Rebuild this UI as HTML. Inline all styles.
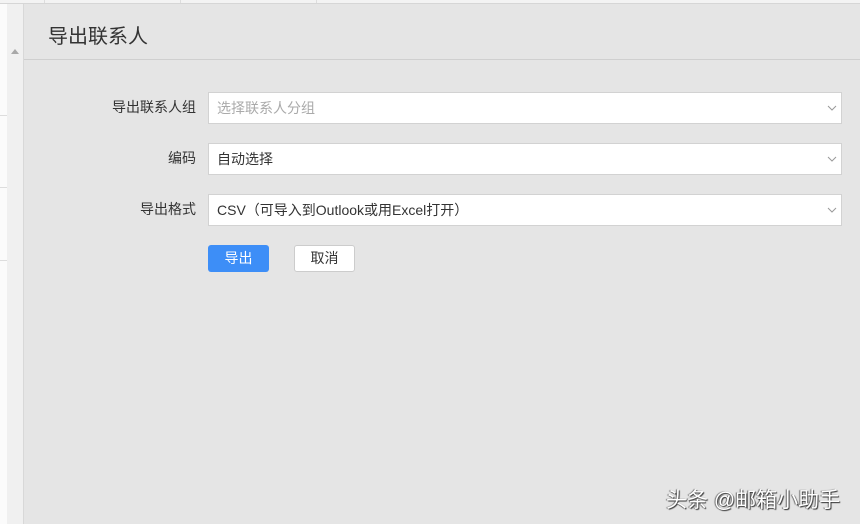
<!DOCTYPE html>
<html><head><meta charset="utf-8"><style>
body{margin:0;width:860px;height:524px;overflow:hidden;background:#e5e5e5;font-family:"Liberation Sans","Noto Sans CJK SC",sans-serif;position:relative}
.abs{position:absolute}
.left{left:0;top:0;width:7px;height:524px;background:#fbfbfb}
.sb{left:7px;top:0;width:16px;height:524px;background:#f0f0f0;border-right:1px solid #d8d8d8}
.top{left:0;top:0;width:860px;height:3px;background:#f3f3f3;border-bottom:1px solid #d6d6d6}
.title{left:48px;top:20px;font-size:20px;color:#333}
.hl{left:24px;top:59px;width:836px;height:1px;background:#cfcfcf}
.lab{width:120px;left:76px;text-align:right;font-size:14px;color:#333}
.sel{left:208px;background:#fff;border:1px solid #d2d2d2;font-size:14px;color:#333;line-height:30px;padding-left:8px;box-sizing:border-box;width:634px;height:32px}
.sel svg{position:absolute;right:4px;top:11px}
.btn{top:245px;height:27px;width:61px;border-radius:3px;font-size:14px;text-align:center;line-height:27px}
</style></head><body>
<div class="abs left"></div>
<div class="abs sb"><div style="position:absolute;left:4px;top:49px;width:0;height:0;border-left:4px solid transparent;border-right:4px solid transparent;border-bottom:5px solid #a8a8a8"></div></div>
<div class="abs" style="left:0;top:115px;width:7px;height:1px;background:#ddd"></div>
<div class="abs" style="left:0;top:187px;width:7px;height:1px;background:#ddd"></div>
<div class="abs" style="left:0;top:260px;width:7px;height:1px;background:#ddd"></div>
<div class="abs top"></div>
<div class="abs" style="left:44px;top:0;width:1px;height:3px;background:#ddd"></div>
<div class="abs" style="left:180px;top:0;width:1px;height:3px;background:#ddd"></div>
<div class="abs" style="left:316px;top:0;width:1px;height:3px;background:#ddd"></div>
<div class="abs title">导出联系人</div>
<div class="abs hl"></div>
<div class="abs lab" style="top:97px">导出联系人组</div>
<div class="abs sel" style="top:92px;color:#aaa">选择联系人分组<svg width="10" height="8"><path d="M1 2l4 4 4-4" stroke="#999" fill="none"/></svg></div>
<div class="abs lab" style="top:148px">编码</div>
<div class="abs sel" style="top:143px">自动选择<svg width="10" height="8"><path d="M1 2l4 4 4-4" stroke="#999" fill="none"/></svg></div>
<div class="abs lab" style="top:199px">导出格式</div>
<div class="abs sel" style="top:194px">CSV（可导入到Outlook或用Excel打开）<svg width="10" height="8"><path d="M1 2l4 4 4-4" stroke="#999" fill="none"/></svg></div>
<div class="abs btn" style="left:208px;background:#3d8ef7;color:#fff">导出</div>
<div class="abs btn" style="left:294px;background:#fff;border:1px solid #ccc;box-sizing:border-box;color:#333;line-height:25px">取消</div>
<div class="abs" style="left:666px;top:484px;font-size:21px;color:#fff;text-shadow:1px 1px 1px #333,-1px 0 1px #666">头条 @邮箱小助手</div>
</body></html>
